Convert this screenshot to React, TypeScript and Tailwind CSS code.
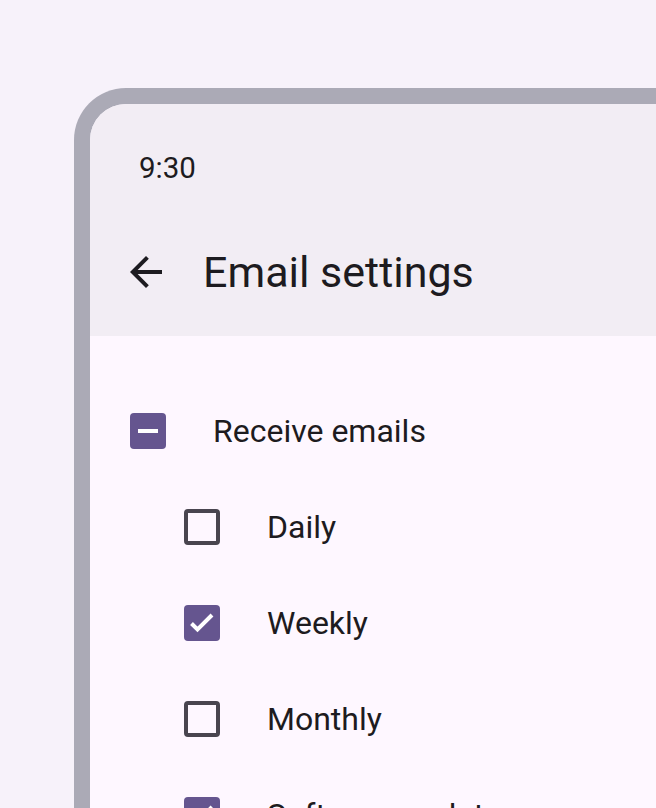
import React from 'react';

type Row = {
  label: string;
  state: 'on' | 'off' | 'mixed';
  child?: boolean;
};

const rows: Row[] = [
  { label: 'Receive emails', state: 'mixed' },
  { label: 'Daily', state: 'off', child: true },
  { label: 'Weekly', state: 'on', child: true },
  { label: 'Monthly', state: 'off', child: true },
  { label: 'Software updates', state: 'on', child: true },
];

const Checkbox = ({ state }: { state: Row['state'] }) => {
  if (state === 'off') {
    return <div className="w-[36px] h-[36px] rounded-[4px] border-[4px] border-[#49454f] flex-shrink-0" />;
  }
  return (
    <div className="w-[36px] h-[36px] rounded-[4px] bg-[#65558f] flex items-center justify-center flex-shrink-0">
      {state === 'mixed' ? (
        <div className="w-[20px] h-[4px] bg-white" />
      ) : (
        <svg width="36" height="36" viewBox="0 0 36 36">
          <polyline points="7.5,18.5 13.5,24.5 28,10" fill="none" stroke="white" strokeWidth="4" />
        </svg>
      )}
    </div>
  );
};

export default function App() {
  return (
    <div
      className="w-[656px] h-[808px] overflow-hidden bg-[#f7f2fa] pl-[74px] pt-[88px]"
      style={{ fontFamily: 'Roboto, "Noto Sans", sans-serif' }}
    >
      <div className="w-[720px] h-[760px] border-[16px] border-b-0 border-[#abaab6] rounded-t-[52px] overflow-hidden flex flex-col">
        {/* Status bar + top app bar */}
        <div className="bg-[#f2edf4] flex flex-col">
          <div className="h-[104px] pl-[49px] pt-[46px]">
            <span className="text-[29.5px] leading-[36px] font-normal text-[#1d1b20]">9:30</span>
          </div>
          <div className="h-[128px] flex items-center pl-[32px]">
            <svg width="48" height="48" viewBox="0 0 24 24" className="flex-shrink-0">
              <path
                d="M20 11H7.83l5.59-5.59L12 4l-8 8 8 8 1.41-1.41L7.83 13H20v-2z"
                fill="#1d1b20"
              />
            </svg>
            <span className="ml-[33px] text-[43px] leading-[56px] text-[#1d1b20]">Email settings</span>
          </div>
        </div>

        {/* List */}
        <div className="flex-1 bg-[#fef7ff] pt-[47px] pl-[40px]">
          {rows.map((r) => (
            <div key={r.label} className={`h-[96px] flex items-center ${r.child ? 'pl-[54px]' : ''}`}>
              <Checkbox state={r.state} />
              <span className="ml-[47px] text-[32px] leading-[40px] text-[#1d1b20] whitespace-nowrap">{r.label}</span>
            </div>
          ))}
        </div>
      </div>
    </div>
  );
}
